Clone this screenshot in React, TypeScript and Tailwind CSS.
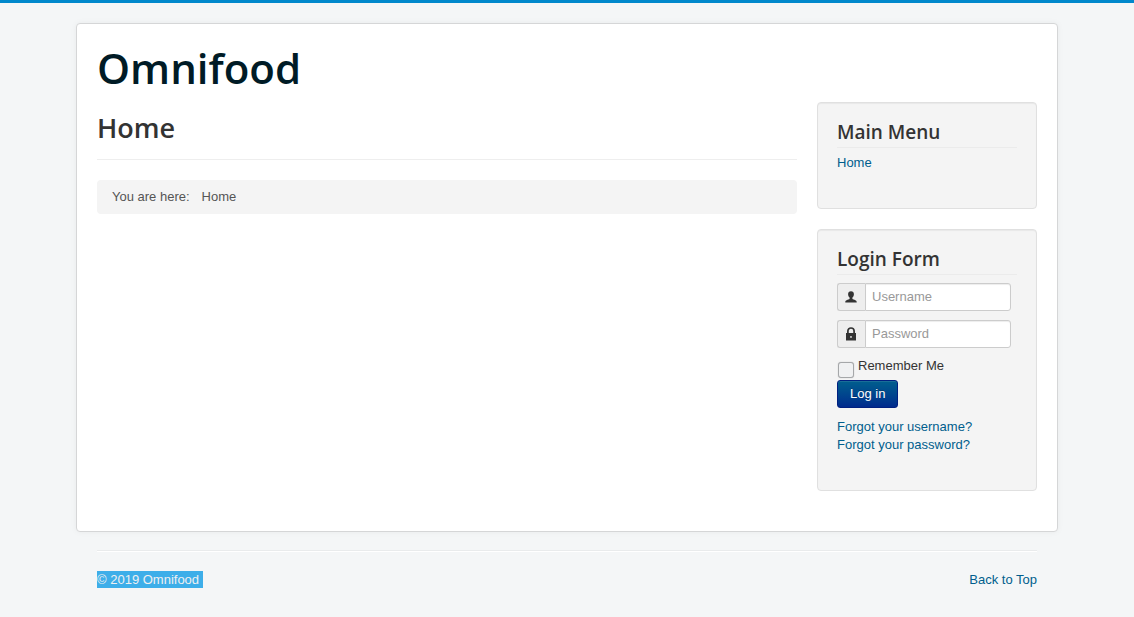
import type { ReactNode } from "react";

function UserIcon() {
  return (
    <svg width="12" height="12" viewBox="0 0 12 12" fill="#333333" aria-hidden="true">
      <path d="M6 0.3C4.1 0.3 3.1 1.5 3.1 3.2C3.1 4.6 3.8 5.9 4.6 6.6V7.9C3.2 8.6 0.3 9 0.3 10.9V11.5H11.7V10.9C11.7 9 8.8 8.6 7.4 7.9V6.6C8.2 5.9 8.9 4.6 8.9 3.2C8.9 1.5 7.9 0.3 6 0.3Z" />
    </svg>
  );
}

function LockIcon() {
  return (
    <svg width="12" height="14" viewBox="0 0 12 14" fill="none" aria-hidden="true">
      <path d="M2.9 7V4C2.9 2.1 4.1 1 6 1S9.1 2.1 9.1 4V7" stroke="#333333" strokeWidth="1.7" />
      <path fillRule="evenodd" fill="#333333" d="M1 6H11V13.5H1ZM6 9A0.9 0.9 0 1 0 6 10.8A0.9 0.9 0 1 0 6 9Z" />
    </svg>
  );
}

function Well({ title, children }: { title: string; children: ReactNode }) {
  return (
    <section className="mb-5 rounded border border-[#e0e0e0] bg-[#f4f4f4] px-[19px] pt-[19px] pb-9 shadow-[inset_0_1px_1px_rgba(0,0,0,0.05)]">
      <h3 className="mb-1.5 border-b border-[#ebebeb] pb-[5px] font-['Open_Sans',sans-serif] text-[19px] leading-5 font-semibold">
        {title}
      </h3>
      {children}
    </section>
  );
}

function Field({ id, label, type, icon }: { id: string; label: string; type: string; icon: ReactNode }) {
  return (
    <div className="mb-[9px] flex h-7 w-[174px]">
      <label
        htmlFor={id}
        aria-label={label}
        className="flex w-7 shrink-0 items-center rounded-l-[3px] border border-r-0 border-[#cccccc] bg-[#eeeeee] pl-[7px]"
      >
        {icon}
      </label>
      <input
        id={id}
        type={type}
        placeholder={label}
        className="min-w-0 flex-1 rounded-r-[3px] border border-[#cccccc] bg-white px-1.5 shadow-[inset_0_1px_1px_rgba(0,0,0,0.075)] placeholder:text-[#999999]"
      />
    </div>
  );
}

export default function App() {
  return (
    <div
      id="top"
      className="min-h-screen border-t-[3px] border-[#0088cc] bg-[#f4f6f7] px-5 pt-5 font-['Liberation_Sans',Arial,sans-serif] text-[13px] leading-[18px] text-[#333333]"
    >
      <div className="mx-auto max-w-[982px] rounded border border-[#d5d6d7] bg-white p-5 shadow-[0_0_6px_rgba(0,0,0,0.05)]">
        <header className="mb-2.5">
          <a href="#top" className="block font-['Open_Sans',sans-serif] text-[42px] leading-[48px] font-semibold text-[#001b26]">
            Omnifood
          </a>
        </header>
        <div className="flex gap-5">
          <main className="min-w-0 flex-1">
            <h2 className="mb-5 border-b border-[#eeeeee] pt-2 pb-[13px] font-['Open_Sans',sans-serif] text-[27px] leading-9 font-semibold">
              Home
            </h2>
            <nav aria-label="Breadcrumbs" className="flex gap-3 rounded bg-[#f4f4f4] px-[15px] py-2 text-[#555555]">
              <span>You are here:</span>
              <span>Home</span>
            </nav>
          </main>
          <aside className="w-[220px] shrink-0">
            <Well title="Main Menu">
              <a href="#top" className="text-[#005e8d]">
                Home
              </a>
            </Well>
            <Well title="Login Form">
              <form className="pt-0.5">
                <Field id="username" label="Username" type="text" icon={<UserIcon />} />
                <Field id="password" label="Password" type="password" icon={<LockIcon />} />
                <div className="flex h-[23px] gap-1 pl-px">
                  <input
                    id="remember"
                    type="checkbox"
                    className="mt-[5px] size-4 appearance-none rounded-[3px] border border-[#a5a7a9] bg-[#f0f1f2] shadow-[0_0_1px_rgba(0,0,0,0.3)] checked:bg-[#005e8d]"
                  />
                  <label htmlFor="remember">Remember Me</label>
                </div>
                <button
                  type="submit"
                  className="mb-2.5 flex h-7 items-center rounded-[3px] border border-[#002080] bg-linear-to-b from-[#005e8d] to-[#002a8d] px-3 text-white shadow-[inset_0_1px_0_rgba(255,255,255,0.1)] text-shadow-[0_-1px_0_rgba(0,0,0,0.25)]"
                >
                  Log in
                </button>
                <ul className="text-[#005e8d]">
                  <li>
                    <a href="#username">Forgot your username?</a>
                  </li>
                  <li>
                    <a href="#password">Forgot your password?</a>
                  </li>
                </ul>
              </form>
            </Well>
          </aside>
        </div>
      </div>
      <footer className="mx-auto mt-[18px] max-w-[940px] border-t border-[#e9ebec] pb-7">
        <div className="flex items-start justify-between border-t border-white pt-[19px]">
          <p className="bg-[#3daee9] pr-1 leading-[17px] text-[#eff0f1]">© 2019 Omnifood</p>
          <a href="#top" className="text-[#005e8d]">
            Back to Top
          </a>
        </div>
      </footer>
    </div>
  );
}
